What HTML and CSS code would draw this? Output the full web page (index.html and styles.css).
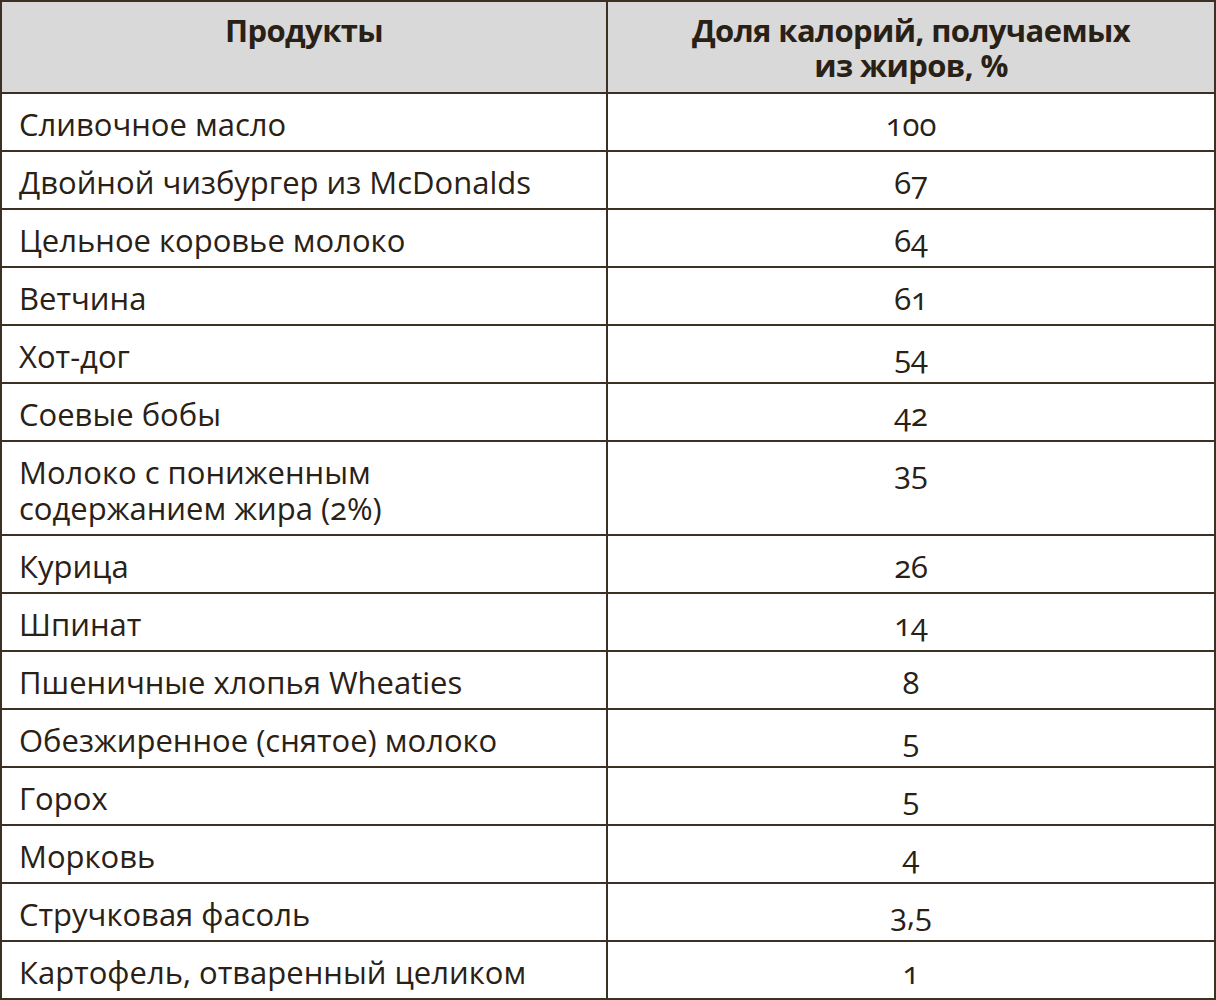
FILE: index.html
```html
<!DOCTYPE html>
<html lang="ru">
<head>
<meta charset="utf-8">
<link rel="stylesheet" href="styles.css">
</head>
<body>
<table class="fat-table">
  <colgroup><col class="c1"><col class="c2"></colgroup>
  <thead>
    <tr><th>Продукты</th><th>Доля калорий, получаемых<br>из жиров, %</th></tr>
  </thead>
  <tbody>
    <tr><td>Сливочное масло</td><td class="num">100</td></tr>
    <tr><td>Двойной чизбургер из McDonalds</td><td class="num">67</td></tr>
    <tr><td>Цельное коровье молоко</td><td class="num">64</td></tr>
    <tr><td>Ветчина</td><td class="num">61</td></tr>
    <tr><td>Хот-дог</td><td class="num">54</td></tr>
    <tr><td>Соевые бобы</td><td class="num">42</td></tr>
    <tr><td>Молоко с пониженным<br>содержанием жира (2%)</td><td class="num">35</td></tr>
    <tr><td>Курица</td><td class="num">26</td></tr>
    <tr><td>Шпинат</td><td class="num">14</td></tr>
    <tr><td>Пшеничные хлопья Wheaties</td><td class="num">8</td></tr>
    <tr><td>Обезжиренное (снятое) молоко</td><td class="num">5</td></tr>
    <tr><td>Горох</td><td class="num">5</td></tr>
    <tr><td>Морковь</td><td class="num">4</td></tr>
    <tr><td>Стручковая фасоль</td><td class="num">3,5</td></tr>
    <tr><td>Картофель, отваренный целиком</td><td class="num">1</td></tr>
  </tbody>
</table>
</body>
</html>
```
FILE: styles.css
```css
html, body {
  margin: 0;
  padding: 0;
  background: #ffffff;
}
.fat-table {
  width: 1216px;
  border-collapse: collapse;
  font-family: "Open Sans", "Noto Sans", sans-serif;
  color: #2a2116;
  font-variant-numeric: oldstyle-nums;
}
.c1 { width: 607px; }
.c2 { width: 609px; }
.fat-table th,
.fat-table td {
  border: 2px solid #3a3122;
  padding: 12px 0 8px 17px;
  vertical-align: top;
  line-height: 36px;
  font-size: 31px;
  text-align: left;
}
.fat-table th {
  background: #d9d9d9;
  font-weight: 700;
  text-align: center;
  padding: 11px 0 9px 0;
  line-height: 35px;
  font-size: 31px;
  letter-spacing: -0.6px;
}
.fat-table td.num {
  text-align: center;
  padding-left: 0;
}
```
